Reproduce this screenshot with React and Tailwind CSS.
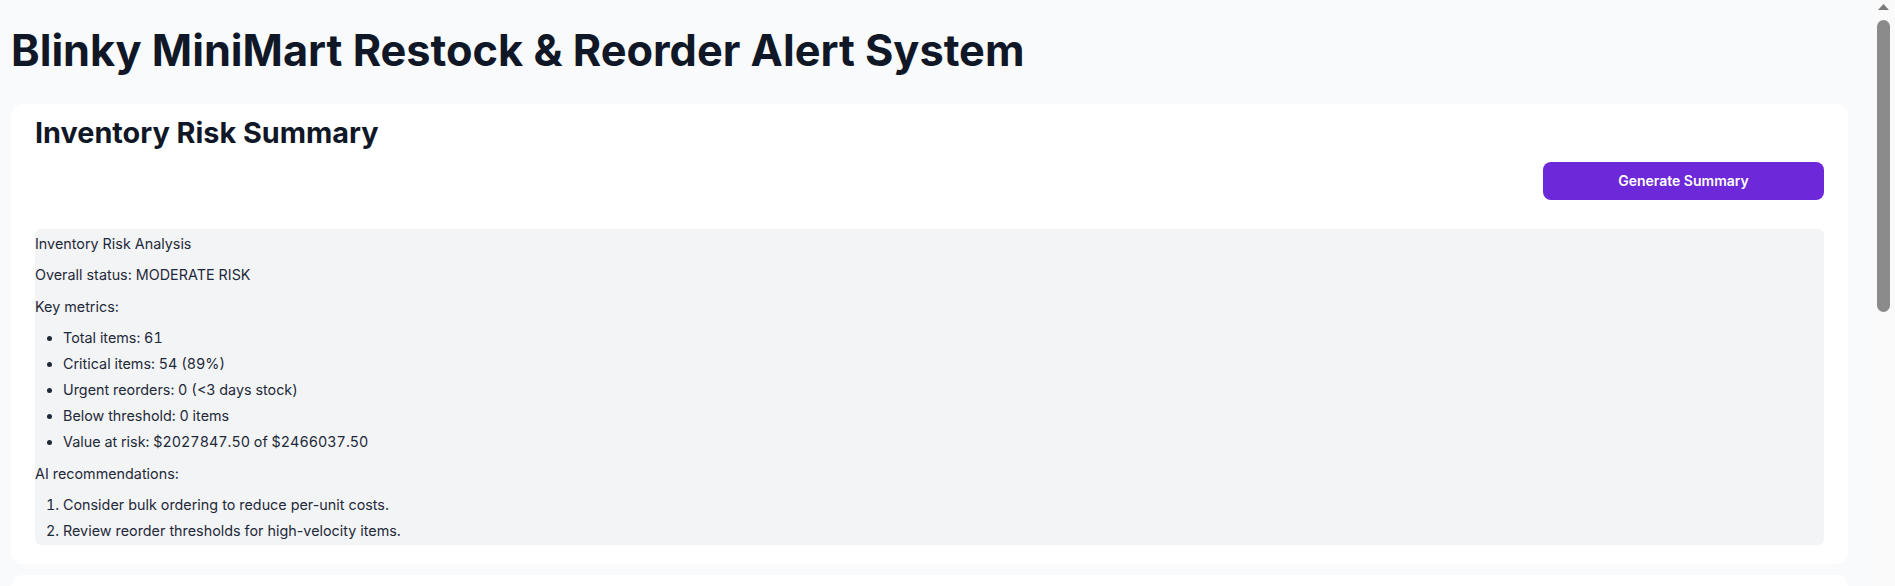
import React from "react";

const metrics = [
  "Total items: 61",
  "Critical items: 54 (89%)",
  "Urgent reorders: 0 (<3 days stock)",
  "Below threshold: 0 items",
  "Value at risk: $2027847.50 of $2466037.50",
];

const recommendations = [
  "Consider bulk ordering to reduce per-unit costs.",
  "Review reorder thresholds for high-velocity items.",
];

function SummaryBox() {
  return (
    <div className="mt-[29px] rounded-md bg-gray-100 py-[3.5px] text-[14.35px] leading-[21px] text-gray-800">
      <p>Inventory Risk Analysis</p>
      <p className="mt-[10.5px]">Overall status: MODERATE RISK</p>
      <p className="mt-[10.5px]">Key metrics:</p>
      <ul className="mt-[10.5px] list-disc space-y-[5px] pl-7 tabular-nums">
        {metrics.map((m) => (
          <li key={m}>{m}</li>
        ))}
      </ul>
      <p className="mt-[10.5px]">AI recommendations:</p>
      <ol className="mt-[10.5px] list-decimal space-y-[5px] pl-7">
        {recommendations.map((r) => (
          <li key={r}>{r}</li>
        ))}
      </ol>
    </div>
  );
}

// browser scrollbar, as it shows in the screenshot
function Scrollbar() {
  return (
    <aside className="flex h-screen w-[23px] shrink-0 flex-col bg-[#fafafa]">
      <svg className="ml-[6px] mt-[4px]" width="11" height="6" viewBox="0 0 11 6">
        <polygon points="0,6 5.5,0 11,6" fill="#7c7c7c" />
      </svg>
      <div className="ml-[5px] mt-[10px] h-[292px] w-[13px] rounded-full bg-[#8b8b8b]" />
    </aside>
  );
}

export default function App() {
  return (
    <div className="flex h-screen overflow-hidden bg-gray-50 font-['Inter',sans-serif] text-gray-900">
      <main className="flex-1 overflow-y-auto">
        <div className="pb-[11px] pl-[11px] pr-[24px] pt-[25px]">
          <h1 className="mb-[29px] text-[43.3px] font-bold leading-[50px] text-gray-900">
            Blinky MiniMart Restock &amp; Reorder Alert System
          </h1>

          <section className="rounded-xl bg-white px-6 pb-[19px] pt-[11px]">
            <h2 className="text-[28.8px] font-bold leading-[36px] text-gray-900">
              Inventory Risk Summary
            </h2>
            <div className="mt-[11px] flex justify-end">
              <button className="h-[38px] w-[281px] rounded-lg bg-[#6d28d9] text-sm font-semibold text-white">
                Generate Summary
              </button>
            </div>
            <SummaryBox />
          </section>

          <section className="mt-[11px] min-h-[560px] rounded-xl bg-white px-6 pt-6" />
        </div>
      </main>
      <Scrollbar />
    </div>
  );
}
